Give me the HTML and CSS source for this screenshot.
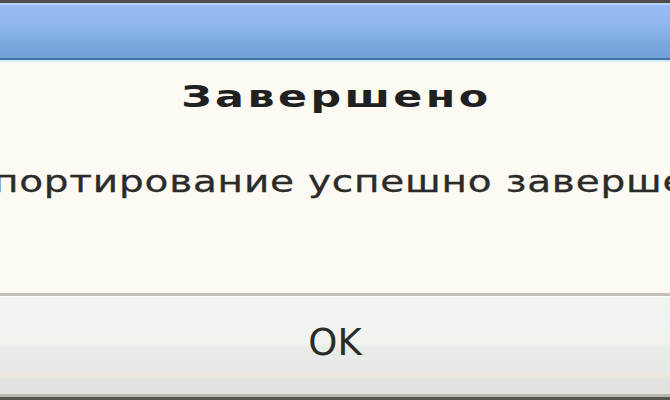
FILE: index.html
```html
<!DOCTYPE html>
<html lang="ru">
<head>
<meta charset="utf-8">
<title>Завершено</title>
<link rel="stylesheet" href="styles.css">
</head>
<body>
<div class="window">
  <div class="frame-top"></div>
  <div class="titlebar"></div>
  <div class="content">
    <h1 class="primary">Завершено</h1>
    <p class="secondary">Импортирование успешно завершено</p>
  </div>
  <div class="actions">
    <button class="btn" type="button">OK</button>
  </div>
  <div class="frame-bottom"></div>
</div>
</body>
</html>
```

FILE: styles.css
```css
html, body {
  margin: 0;
  padding: 0;
  width: 670px;
  height: 400px;
  overflow: hidden;
  background: #fdfaf3;
}

.window {
  display: flex;
  flex-direction: column;
  width: 670px;
  height: 400px;
  font-family: "DejaVu Sans", "Liberation Sans", sans-serif;
}

.frame-top {
  height: 3px;
  background: #4f4c49;
}

.titlebar {
  height: 53px;
  border-top: 2px solid #b6d3f8;
  border-bottom: 2px solid #4671a7;
  box-shadow: 0 2px 0 #cff3fc;
  margin-bottom: 2px;
  background: linear-gradient(to bottom, #9dbcf3 0%, #8fb5ee 40%, #79a8de 75%, #6f9fd6 100%);
}

.content {
  flex: 1;
  display: flex;
  flex-direction: column;
  align-items: center;
  background: #fdfaf3;
  color: #2b2c2a;
  padding-top: 14px;
  overflow: hidden;
}

.primary {
  margin: 0;
  padding-left: 2.5px;
  font-size: 31px;
  font-weight: bold;
  line-height: 40px;
  letter-spacing: 2.5px;
  white-space: nowrap;
  color: #1e211f;
  transform: scaleX(1.38);
}

.secondary {
  margin: 47px 0 0;
  padding-left: 0.6px;
  font-size: 30px;
  line-height: 38px;
  letter-spacing: 0.6px;
  white-space: nowrap;
  -webkit-text-stroke: 0.3px #2b2c2a;
  transform: scaleX(1.3);
}

.actions {
  display: flex;
  height: 98px;
  border-top: 3px solid #c3bfb7;
  border-bottom: 3px solid #bab7af;
}

.btn {
  flex: 1;
  margin: 0;
  padding: 0 0 6px;
  border: 0;
  border-top: 1px solid #ffffff;
  background: linear-gradient(to bottom, #eff4f1 0%, #f1f3f1 38%, #f4f2ec 47%, #e8ede9 52%, #e8e9e7 75%, #ede9e2 80%, #dfe1e0 86%, #e4e3dd 100%);
  font-family: "DejaVu Sans", "Liberation Sans", sans-serif;
  font-size: 37px;
  color: #2b2c2a;
}

.frame-bottom {
  height: 3px;
  background: #585551;
}
```
